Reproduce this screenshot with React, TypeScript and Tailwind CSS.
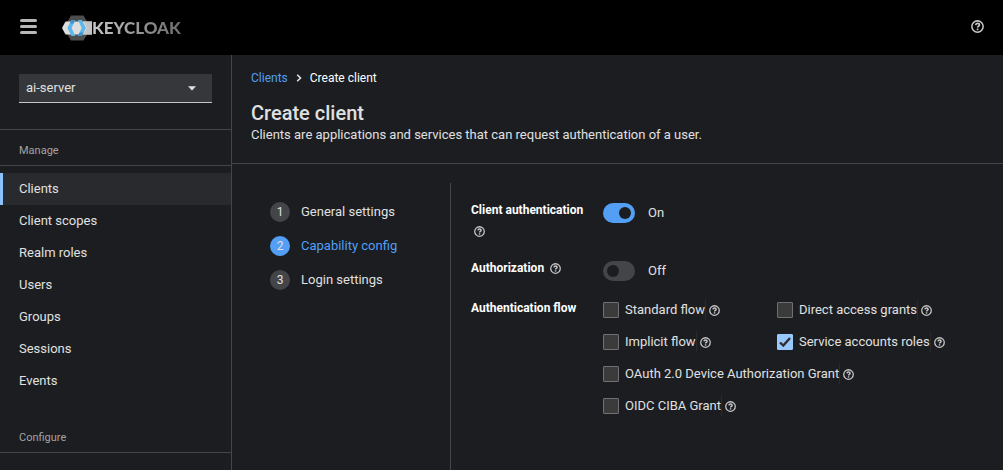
import React from "react";

const manageItems = ["Clients", "Client scopes", "Realm roles", "Users", "Groups", "Sessions", "Events"];
const configureItems = ["Realm settings"];

const steps = ["General settings", "Capability config", "Login settings"];

const flows = [
  { id: "standard", label: "Standard flow", checked: false, wide: false },
  { id: "direct", label: "Direct access grants", checked: false, wide: false },
  { id: "implicit", label: "Implicit flow", checked: false, wide: false },
  { id: "service", label: "Service accounts roles", checked: true, wide: false },
  { id: "device", label: "OAuth 2.0 Device Authorization Grant", checked: false, wide: true },
  { id: "ciba", label: "OIDC CIBA Grant", checked: false, wide: true },
];

const HelpIcon: React.FC<{ className: string }> = ({ className }) => (
  <svg viewBox="0 0 24 24" className={className} fill="none" stroke="currentColor" aria-hidden="true">
    <circle cx="12" cy="12" r="10.4" strokeWidth="2.8" />
    <path d="M8.6 9.6c.2-2.2 1.6-3.2 3.5-3.2 2 0 3.4 1.1 3.4 2.9 0 2.5-3.3 2.3-3.3 4.7" strokeWidth="3.2" />
    <path d="M12.1 15.8v3" strokeWidth="3.2" />
  </svg>
);

const HelpButton: React.FC<{ topic: string }> = ({ topic }) => (
  <button type="button" aria-label={`Help for ${topic}`} className="inline-flex shrink-0 text-[#c7c7c7]">
    <HelpIcon className="h-[11px] w-[11px]" />
  </button>
);

const Logo: React.FC = () => (
  <a href="#" className="flex items-center" aria-label="Keycloak">
    <svg viewBox="0 0 30 26" className="h-[26px] w-[30px]" aria-hidden="true">
      <path d="M9 .5h12.500L27 10v6l-5.500 9.500H9L3.500 16v-6z" fill="#4d4d4d" />
      <path d="M3.500 6.500H30v13H3.500L0 13z" fill="#dedede" />
      <path d="M21.500 6.500H30v13h-8.500L25 13z" fill="#c4c4c4" />
      <path d="M9.500 5h3.800L9.600 13l3.700 8H9.500L5.300 13z" fill="#5cb8ea" />
      <path d="M16 5h3.800l4.200 8-4.200 8H16l3.700-8z" fill="#5cb8ea" />
      <path d="M9.500 5h3.800l-1.700 3.500H7.700zM16 21h3.800l1.800-3.500h-4z" fill="#3f93c8" />
    </svg>
    <span className="bg-linear-to-r from-[#c8c8c8] to-[#6c6c6c] bg-clip-text font-[Lato,sans-serif] text-[17px] font-black leading-6 text-transparent">
      KEYCLOAK
    </span>
  </a>
);

const NavSection: React.FC<{ title: string; items: string[]; current?: string }> = ({ title, items, current }) => (
  <section>
    <h2 className="border-b border-[#444548] px-[19px] pb-[4px] pt-[11px] text-[11px] leading-5 text-[#a3a3a3]">{title}</h2>
    <ul className="pt-[7px]">
      {items.map((item) => (
        <li key={item}>
          <a
            href="#"
            className={
              item === current
                ? "block border-l-[3px] border-[#8cc2fa] bg-[#292a2d] py-[5px] pl-4 leading-[22px]"
                : "block py-[5px] pl-[19px] leading-[22px]"
            }
          >
            {item}
          </a>
        </li>
      ))}
    </ul>
  </section>
);

const Toggle: React.FC<{ id: string; on: boolean }> = ({ id, on }) => (
  <div className="flex items-center gap-[13px] self-start pb-px pt-[3px]">
    <input
      id={id}
      type="checkbox"
      role="switch"
      defaultChecked={on}
      className="h-5 w-8 shrink-0 appearance-none rounded-full bg-[#444548] p-1 before:block before:size-3 before:rounded-full before:bg-[#1b1d21] checked:bg-[#529ff5] checked:before:ml-3"
    />
    <span className="leading-5">{on ? "On" : "Off"}</span>
  </div>
);

export default function App() {
  return (
    <div className="flex h-screen flex-col overflow-hidden bg-[#1b1d21] font-[Roboto,sans-serif] text-[13px] text-[#e0e0e0]">
      <header className="flex h-[55px] shrink-0 items-center bg-black pb-[2px] pl-5 pr-[19px]">
        <button type="button" aria-label="Global navigation" className="mr-[25px] flex w-[17px] flex-col gap-[3px]">
          <span className="h-[3px] rounded-full bg-[#b8b8b8]" />
          <span className="h-[3px] rounded-full bg-[#b8b8b8]" />
          <span className="h-[3px] rounded-full bg-[#b8b8b8]" />
        </button>
        <div className="pt-[2px]">
          <Logo />
        </div>
        <button type="button" aria-label="Help" className="ml-auto text-[#c7c7c7]">
          <HelpIcon className="h-[13px] w-[13px]" />
        </button>
      </header>

      <div className="flex min-h-0 flex-1">
        <nav className="w-[232px] shrink-0 overflow-hidden border-r border-[#444548]">
          <div className="border-b border-[#444548] px-[19px] pb-[26px] pt-[19px]">
            <div className="relative">
              <select
                aria-label="Realm"
                className="block h-[29px] w-full appearance-none rounded-none border-b border-[#c7c7c7] bg-[#36373a] pl-[7px] pr-8"
              >
                <option>ai-server</option>
              </select>
              <svg viewBox="0 0 8 5" className="pointer-events-none absolute right-4 top-3 h-[5px] w-2" aria-hidden="true">
                <path d="M0 .3h8L4 4.600z" fill="#e0e0e0" />
              </svg>
            </div>
          </div>
          <div className="flex flex-col gap-5">
            <NavSection title="Manage" items={manageItems} current="Clients" />
            <NavSection title="Configure" items={configureItems} />
          </div>
        </nav>

        <main className="min-w-0 flex-1">
          <section className="border-b border-[#444548] px-[19px] pb-[18px] pt-[14px]">
            <nav aria-label="Breadcrumb" className="flex items-center text-[12px] leading-[18px]">
              <a href="#" className="text-[#529ff5]">Clients</a>
              <svg viewBox="0 0 6 8" className="mx-2 h-2 w-[6px]" fill="none" stroke="#e0e0e0" strokeWidth="1.6" aria-hidden="true">
                <path d="M1.200.8 4.500 4 1.200 7.200" />
              </svg>
              <span className="text-white">Create client</span>
            </nav>
            <h1 className="mt-[14px] text-[20px] font-medium leading-6">Create client</h1>
            <p className="leading-5">Clients are applications and services that can request authentication of a user.</p>
          </section>

          <div className="flex h-full pt-[19px]">
            <ol className="flex w-[219px] shrink-0 flex-col gap-[14px] border-r border-[#444548] pl-[38px] pt-[19px]">
              {steps.map((step, index) => (
                <li key={step}>
                  <button type="button" className="flex items-center gap-[11px] leading-5" aria-current={index === 1 ? "step" : undefined}>
                    <span
                      className={
                        index === 1
                          ? "size-5 rounded-full bg-[#529ff5] text-center text-[12px]"
                          : "size-5 rounded-full bg-[#444548] text-center text-[12px]"
                      }
                    >
                      {index + 1}
                    </span>
                    <span className={index === 1 ? "text-[#529ff5]" : ""}>{step}</span>
                  </button>
                </li>
              ))}
            </ol>

            <form className="grid flex-1 auto-rows-max grid-cols-[112px_1fr] content-start gap-x-5 gap-y-4 pl-5 pt-[17px]">
              <div className="flex flex-wrap items-center gap-x-[6px] text-[12px] font-bold leading-[21px] text-white">
                <label htmlFor="client-authentication" className="whitespace-nowrap">Client authentication</label>
                <span className="flex h-[21px] items-center pl-[3px]">
                  <HelpButton topic="Client authentication" />
                </span>
              </div>
              <Toggle id="client-authentication" on />

              <div className="flex items-center gap-x-[6px] self-start text-[12px] font-bold leading-[21px] text-white">
                <label htmlFor="authorization">Authorization</label>
                <HelpButton topic="Authorization" />
              </div>
              <Toggle id="authorization" on={false} />

              <span id="flow-label" className="text-[12px] font-bold leading-[21px] text-white">Authentication flow</span>
              <div role="group" aria-labelledby="flow-label" className="grid grid-cols-[174px_1fr] gap-y-2">
                {flows.map((flow) => (
                  <div key={flow.id} className={flow.wide ? "col-span-2 flex h-6 items-center" : "flex h-6 items-center"}>
                    <span className="relative mr-[6px] size-4 shrink-0">
                      <input
                        id={flow.id}
                        type="checkbox"
                        defaultChecked={flow.checked}
                        className="peer block size-4 appearance-none rounded-[1px] border border-[#707070] bg-[#3b3b3b] checked:border-[#99c8ff] checked:bg-[#99c8ff]"
                      />
                      <svg viewBox="0 0 16 16" className="pointer-events-none absolute inset-0 hidden size-4 peer-checked:block" fill="none" stroke="#303030" strokeWidth="2.4" aria-hidden="true">
                        <path d="M3 8.500 6.300 11.600 13 4" />
                      </svg>
                    </span>
                    <label htmlFor={flow.id} className="mr-[3px] whitespace-nowrap border-r border-[#292a2d] leading-5">{flow.label}</label>
                    <HelpButton topic={flow.label} />
                  </div>
                ))}
              </div>
            </form>
          </div>
        </main>
      </div>
    </div>
  );
}
